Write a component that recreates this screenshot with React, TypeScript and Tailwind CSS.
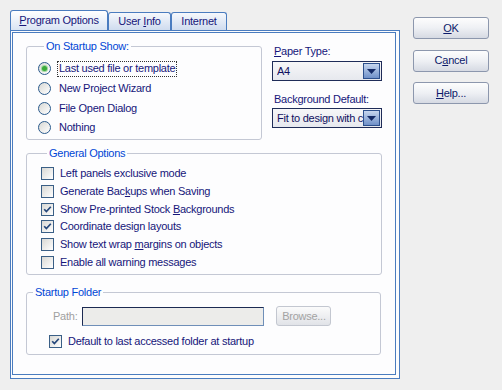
import React from "react";

const U = ({ children }: { children: React.ReactNode }) => (
  <span className="underline underline-offset-[1px] decoration-[1px]">{children}</span>
);

const Radio = ({ checked }: { checked?: boolean }) => (
  <span className="w-[13px] h-[13px] rounded-full border border-[#2a5a8c] bg-gradient-to-br from-[#d8d8d4] to-white flex items-center justify-center shrink-0">
    {checked && (
      <span className="w-[5px] h-[5px] rounded-full bg-[#3caa3c] shadow-[0_0_0_1px_#9ed79e]" />
    )}
  </span>
);

const Check = ({ checked }: { checked?: boolean }) => (
  <span className="w-[13px] h-[13px] border border-[#3a5f86] bg-gradient-to-br from-[#d8d8d4] to-white flex items-center justify-center shrink-0">
    {checked && (
      <svg width="9" height="9" viewBox="0 0 9 9">
        <path d="M1.2 4.2 L3.4 6.6 L7.8 1.8" stroke="#24467a" strokeWidth="1.7" fill="none" />
      </svg>
    )}
  </span>
);

const Select = ({ value }: { value: string }) => (
  <div className="w-[110px] h-[20px] border border-[#1f2c58] bg-gradient-to-b from-[#f7f7f8] to-[#e6e8ee] flex items-center pl-[4px] pr-[1px]">
    <span className="flex-1 overflow-hidden whitespace-nowrap text-[#101060]">{value}</span>
    <span className="w-[17px] h-[16px] border border-[#2c4f8c] bg-gradient-to-b from-[#c7d6ee] to-[#6f90c8] flex items-center justify-center shrink-0">
      <svg width="9" height="5" viewBox="0 0 9 5">
        <path d="M0 0 H9 L4.5 5 Z" fill="#142a66" />
      </svg>
    </span>
  </div>
);

const Btn = ({ children }: { children: React.ReactNode }) => (
  <div className="w-[76px] h-[22px] rounded-[3px] border border-[#8c97ad] bg-gradient-to-b from-[#fdfdfd] via-[#eef0f4] to-[#d6dae3] flex items-center justify-center text-[#0c1a6a]">
    {children}
  </div>
);

const Group = ({
  title,
  className,
  children,
}: {
  title: string;
  className: string;
  children: React.ReactNode;
}) => (
  <fieldset className={`border border-[#c4c8d4] rounded-[3px] ${className}`}>
    <legend className="ml-[6px] px-[2px] text-[#0046d5] leading-[13px]">{title}</legend>
    {children}
  </fieldset>
);

export default function App() {
  const checks: [React.ReactNode, boolean][] = [
    ["Left panels exclusive mode", false],
    [<>Generate Bac<U>k</U>ups when Saving</>, false],
    [<>Show Pre-printed Stock <U>B</U>ackgrounds</>, true],
    ["Coordinate design layouts", true],
    [<>Show text wrap <U>m</U>argins on objects</>, false],
    ["Enable all warning messages", false],
  ];
  return (
    <div className="w-[502px] h-[390px] bg-[#efefef] flex pt-[10px] pl-[10px] font-['Liberation_Sans',Arial,sans-serif] text-[11px] leading-[13px] tracking-[-0.25px] text-[#16167a]">
      <div className="flex flex-col w-[390px]">
        <div className="flex items-end h-[20px]">
          <div className="w-[98px] h-[20px] rounded-t-[3px] border border-b-0 border-[#4a7cbf] bg-gradient-to-b from-white to-[#d9e4f3] flex items-center justify-center">
            <span><U>P</U>rogram Options</span>
          </div>
          <div className="w-[63px] h-[18px] rounded-t-[3px] border border-b-0 border-[#4a7cbf] bg-gradient-to-b from-[#f6f8fc] to-[#cfdcef] flex items-center justify-center">
            <span>User <U>I</U>nfo</span>
          </div>
          <div className="w-[56px] h-[18px] rounded-t-[3px] border border-b-0 border-[#4a7cbf] bg-gradient-to-b from-[#f6f8fc] to-[#cfdcef] flex items-center justify-center">
            <span>Internet</span>
          </div>
        </div>
        <div className="h-[349px] border border-[#4a7cbf] pl-[1px] pt-[1px] pr-[3px] pb-[3px] flex bg-[#fdfdfd]">
          <div className="flex-1 border border-[#4a7cbf] bg-[#fdfdfe] flex flex-col pl-[13px] pt-[7px]">
            <div className="flex">
              <Group title="On Startup Show:" className="w-[236px] pt-[6px] pb-[1px] pl-[11px]">
                {[
                  ["Last used file or template", true],
                  ["New Project Wizard", false],
                  ["File Open Dialog", false],
                  ["Nothing", false],
                ].map(([label, on], i) => (
                  <div key={i} className="h-[19.7px] flex items-center">
                    <Radio checked={on as boolean} />
                    <span
                      className={`ml-[6px] px-[1px] py-[0.5px] border border-dotted ${
                        on ? "border-[#333]" : "border-transparent"
                      }`}
                    >
                      {label as string}
                    </span>
                  </div>
                ))}
              </Group>
              <div className="ml-[10px] flex flex-col pt-[5px]">
                <span className="pl-[2px]">
                  <U>P</U>aper Type:
                </span>
                <div className="mt-[3px]">
                  <Select value="A4" />
                </div>
                <span className="pl-[2px] mt-[12px]">Background Default:</span>
                <div className="mt-[2px]">
                  <Select value="Fit to design with changes" />
                </div>
              </div>
            </div>
            <Group title="General Options" className="w-[356px] mt-[7px] pt-[5px] pb-[3px] pl-[14px]">
              {checks.map(([label, on], i) => (
                <div key={i} className="h-[17.75px] flex items-center">
                  <Check checked={on} />
                  <span className="ml-[6px]">{label}</span>
                </div>
              ))}
            </Group>
            <Group title="Startup Folder" className="w-[355px] mt-[11px] pt-[7px] pb-[6px]">
              <div className="flex items-center h-[20px] pl-[26px]">
                <span className="text-[#a0a0a0]">Path:</span>
                <div className="ml-[5px] w-[182px] h-[19px] border border-[#1c2a52] border-r-[#6f8fb8] border-b-[#6f8fb8] bg-[#ececea]" />
                <div className="ml-[12px] w-[55px] h-[20px] rounded-[3px] border border-[#c3c7d0] bg-gradient-to-b from-[#fbfbfb] to-[#e1e3e8] flex items-center justify-center text-[#a3a3a3]">
                  Browse...
                </div>
              </div>
              <div className="flex items-center mt-[9px] ml-[22px] h-[13px]">
                <Check checked />
                <span className="ml-[6px]">Default to last accessed folder at startup</span>
              </div>
            </Group>
          </div>
        </div>
      </div>
      <div className="ml-[13px] mt-[7px] flex flex-col gap-[10.5px]">
        <Btn>
          <U>O</U>K
        </Btn>
        <Btn>
          C<U>a</U>ncel
        </Btn>
        <Btn>
          <U>H</U>elp...
        </Btn>
      </div>
    </div>
  );
}
